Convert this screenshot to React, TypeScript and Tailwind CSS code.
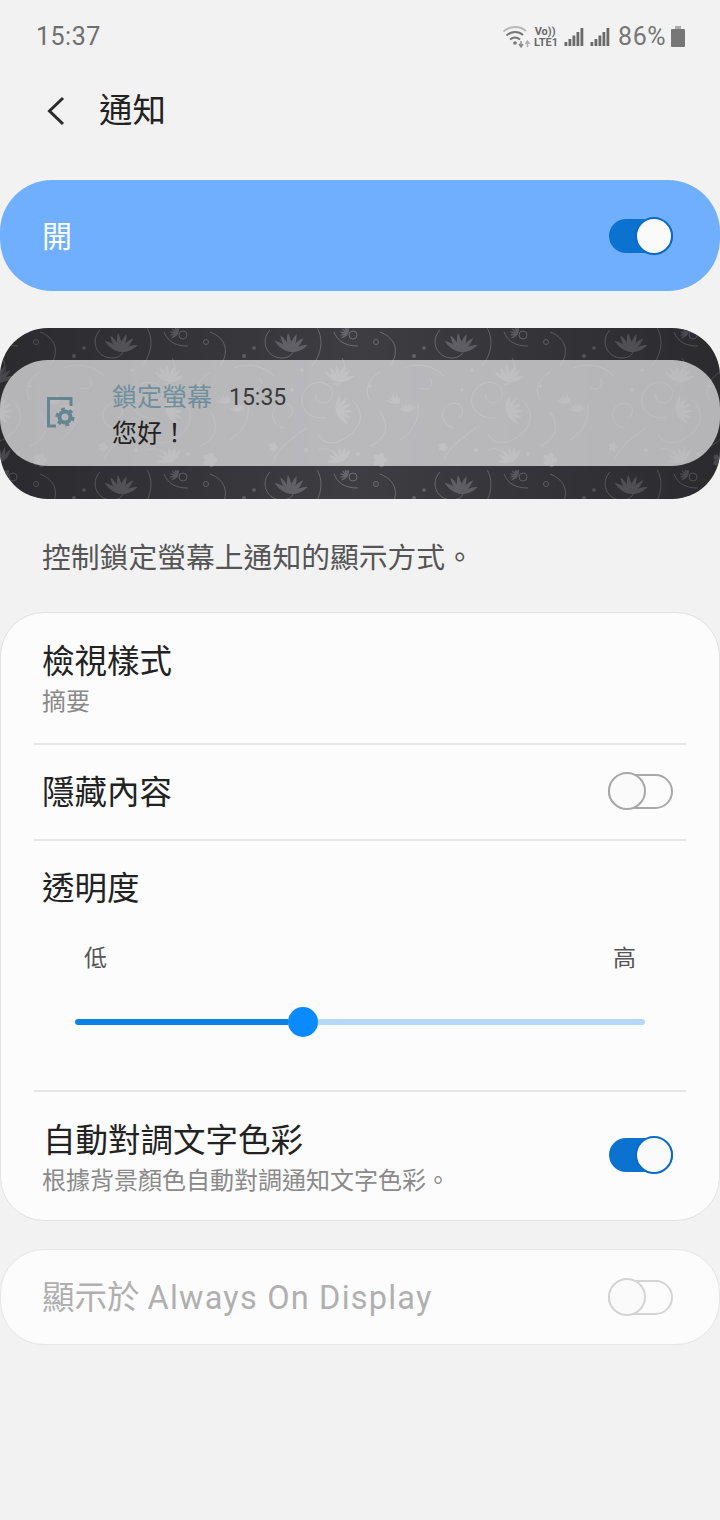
const cjk = "font-['Roboto','Noto_Sans_CJK_TC',sans-serif]";

function Toggle({ on, dim }: { on?: boolean; dim?: boolean }) {
  if (on) {
    return (
      <div className="flex h-[34px] w-[64px] shrink-0 items-center justify-end rounded-full bg-[#0b72d0]">
        <div className="h-[38px] w-[38px] shrink-0 rounded-full border-2 border-[#0b6bc4] bg-[#fafafa]" />
      </div>
    );
  }
  return (
    <div
      className={`flex h-[35px] w-[65px] shrink-0 items-center rounded-full border-2 ${
        dim ? "border-[#d4d4d4]" : "border-[#a8a8a8]"
      }`}
    >
      <div
        className={`-ml-[2px] h-[38px] w-[38px] shrink-0 rounded-full border-2 bg-[#fafafa] ${
          dim ? "border-[#d4d4d4]" : "border-[#a8a8a8]"
        }`}
      />
    </div>
  );
}

function Signal() {
  return (
    <svg width="20" height="20" viewBox="0 0 20 20" fill="#696969">
      <rect x="0.500" y="15" width="2.800" height="4" />
      <rect x="4.500" y="12" width="2.800" height="7" />
      <rect x="8.500" y="8.500" width="2.800" height="10.500" />
      <rect x="12.500" y="5" width="2.800" height="14" />
      <rect x="16.500" y="1" width="2.800" height="18" />
    </svg>
  );
}

function StatusIcons() {
  return (
    <div className="flex items-center text-[#767676]">
      <svg width="30" height="26" viewBox="0 0 30 26" fill="none">
        <path d="M1.500 7.500C8 1.500 18 1.500 24 7" stroke="#b9b9b9" strokeWidth="2" />
        <path d="M4.500 11.500C9.500 7 16.500 7 21 11" stroke="#777" strokeWidth="2" />
        <path d="M8 15.500C11 13 15 13 18 15.500" stroke="#777" strokeWidth="2" />
        <circle cx="13" cy="19" r="1.800" fill="#777" />
        <path d="M19 17v5M17 20l2 3 2-3" stroke="#8a8a8a" strokeWidth="1.400" />
        <path d="M25.500 23v-5M23.500 20l2-3 2 3" stroke="#b0b0b0" strokeWidth="1.400" />
      </svg>
      <div className="mr-[4px] flex w-[28px] flex-col items-center font-['Roboto',sans-serif] text-[11px] font-bold leading-[11px] text-[#6a6a6a]">
        <span className="-ml-[2px]">Vo))</span>
        <span>LTE1</span>
      </div>
      <Signal />
      <div className="ml-[6px]">
        <Signal />
      </div>
      <span className="ml-[8px] font-['Roboto',sans-serif] text-[25px] leading-none tracking-[0.5px] text-[#767676]">86%</span>
      <svg width="14" height="21" viewBox="0 0 14 21" className="ml-[5px]" fill="#777">
        <rect x="4" y="0" width="6" height="3" fill="#aaa" />
        <rect x="0" y="3" width="14" height="18" rx="1" />
      </svg>
    </div>
  );
}

// fan of narrow leaves, used for the thistles in the wallpaper
function Fan({ x, y, rot, size = 1 }: { x: number; y: number; rot: number; size?: number }) {
  return (
    <g transform={`translate(${x} ${y}) rotate(${rot}) scale(${size})`}>
      {[-62, -38, -14, 12, 36, 60].map((a) => (
        <path key={a} transform={`rotate(${a})`} d="M0 0C-3 -6 -2.500 -13 0 -19C2.500 -13 3 -6 0 0Z" />
      ))}
    </g>
  );
}

function Rosette({ x, y, r }: { x: number; y: number; r: number }) {
  return (
    <g>
      <circle cx={x} cy={y} r={r} />
      {[0, 72, 144, 216, 288].map((a) => (
        <circle
          key={a}
          cx={x + Math.cos((a * Math.PI) / 180) * r * 1.2}
          cy={y + Math.sin((a * Math.PI) / 180) * r * 1.2}
          r={r * 0.65}
        />
      ))}
    </g>
  );
}

// damask wallpaper tile, period taken from the reference (170 x 142)
function Wallpaper() {
  return (
    <svg className="absolute inset-0 h-full w-full" aria-hidden="true">
      <defs>
        <pattern id="damask" width="170" height="142" patternUnits="userSpaceOnUse" x="60" y="0">
          <g fill="none" stroke="#6c6c72" strokeWidth="1">
            <path d="M40 2C30 12 36 30 52 30C64 30 68 18 60 12" />
            <path d="M86 -2C94 10 92 26 82 38" />
            <circle cx="123" cy="7" r="4" />
            <circle cx="146" cy="14" r="2.500" />
            <path d="M104 4C108 14 116 18 128 18" />
            <path d="M150 4C166 10 170 24 160 38" />
            <path d="M4 40C18 34 34 38 44 48" />
            <path d="M96 90C70 92 64 66 82 56C96 50 108 62 100 72C94 78 84 74 86 66" />
            <path d="M104 56C116 58 118 40 112 30" />
            <path d="M54 100C42 98 38 82 50 76C60 72 68 84 58 90" />
            <path d="M76 100C60 112 50 118 44 132" />
            <path d="M122 72C136 84 132 102 112 112C100 118 92 114 88 106" />
            <path d="M150 84C160 96 156 112 140 118" />
            <path d="M0 112C12 104 20 92 18 76" />
            <path d="M20 60C30 64 34 56 30 50" />
            <path d="M88 122C98 118 106 124 108 134" />
            <path d="M150 44C138 52 134 62 140 72" />
          </g>
          <g fill="#66666c">
            <Fan x={60} y={24} rot={8} />
            <Fan x={108} y={54} rot={10} size={0.9} />
            <Fan x={106} y={84} rot={75} size={0.9} />
            <Fan x={118} y={6} rot={-60} size={0.45} />
            <Fan x={8} y={84} rot={-5} size={0.5} />
            <Fan x={166} y={76} rot={-5} size={0.55} />
            <Fan x={112} y={134} rot={-25} size={0.8} />
            <Rosette x={43} y={119} r={2.500} />
            <Rosette x={150} y={132} r={4} />
            <circle cx="72" cy="42" r="1.800" />
            <circle cx="62" cy="62" r="1.800" />
            <circle cx="14" cy="28" r="2" />
            <circle cx="24" cy="20" r="1.800" />
            <circle cx="140" cy="58" r="1.800" />
            <circle cx="76" cy="122" r="2" />
            <circle cx="128" cy="126" r="2" />
          </g>
        </pattern>
      </defs>
      <rect width="100%" height="100%" fill="url(#damask)" />
    </svg>
  );
}

export default function App() {
  return (
    <div className={`h-[1520px] w-[720px] overflow-hidden bg-[#f2f2f2] ${cjk}`}>
      <div className="flex h-[73px] items-center justify-between pl-[36px] pr-[35px]">
        <span className="mt-[1px] font-['Roboto',sans-serif] text-[25px] tracking-[0.5px] text-[#6e6e6e]">15:37</span>
        <StatusIcons />
      </div>

      <div className="flex h-[76px] items-center pl-[46px]">
        <svg width="20" height="30" viewBox="0 0 20 30" fill="none" stroke="#2b2b2b" strokeWidth="3">
          <path d="M17 2L3.500 15L17 28" />
        </svg>
        <span className="ml-[33px] text-[33.500px] text-[#222]">通知</span>
      </div>

      <div className="mt-[31px] flex h-[111px] items-center justify-between rounded-[52px] bg-[#70aefe] pl-[42px] pr-[47px]">
        <span className="mt-[1px] text-[30px] text-white">開</span>
        <Toggle on />
      </div>

      <div className="relative mt-[37px] h-[171px] overflow-hidden rounded-[48px] bg-[#3d3d42]">
        <Wallpaper />
        <div className="absolute inset-0 bg-linear-to-r from-black/30 via-transparent to-black/30" />
        <div className="absolute inset-x-0 top-[32px] flex h-[106px] items-center rounded-[48px] bg-[#dcdcdf]/78 pl-[47px]">
          <svg width="30" height="31" viewBox="0 0 30 31" fill="none" className="-mt-[2px]">
            <path d="M9 29H1.500V1.500H24V9" stroke="#648592" strokeWidth="3" />
            <circle cx="18" cy="20" r="5.500" stroke="#648592" strokeWidth="4" />
            <circle cx="18" cy="20" r="8" stroke="#648592" strokeWidth="3" strokeDasharray="3.800 4.580" />
          </svg>
          <div className="ml-[35px] mt-[6px] flex flex-col">
            <div className="flex items-center">
              <span className="text-[25px] leading-[34px] text-[#6f8f9c]">鎖定螢幕</span>
              <span className="ml-[17px] text-[23px] leading-[34px] text-[#3a3a3a]">15:35</span>
            </div>
            <span className="mt-[2px] text-[25px] leading-[34px] text-[#222]">您好！</span>
          </div>
        </div>
      </div>

      <p className="mt-[39px] pl-[42px] text-[28.800px] leading-[40px] text-[#555]">控制鎖定螢幕上通知的顯示方式。</p>

      <div className="mt-[34px] rounded-[44px] border border-[#e2e2e2] bg-[#fcfcfc]">
        <div className="flex h-[130px] flex-col justify-center pl-[41px] pt-[2px]">
          <span className="text-[32.500px] leading-[44px] text-[#222]">檢視樣式</span>
          <span className="mt-[2px] text-[24px] leading-[32px] text-[#8a8a8a]">摘要</span>
        </div>
        <div className="mx-[33px] h-[2px] bg-[#e6e6e6]" />
        <div className="flex h-[94px] items-center justify-between pl-[41px] pr-[46px]">
          <span className="mt-[2px] text-[32.500px] text-[#222]">隱藏內容</span>
          <div className="-mt-[2px]">
            <Toggle />
          </div>
        </div>
        <div className="mx-[33px] h-[2px] bg-[#e6e6e6]" />
        <div className="h-[249px] pt-[26px]">
          <div className="pl-[41px] text-[32.500px] leading-[44px] text-[#222]">透明度</div>
          <div className="mt-[32px] flex justify-between px-[83px] text-[23px] leading-[32px] text-[#555]">
            <span>低</span>
            <span>高</span>
          </div>
          <div className="mx-[74px] mt-[31px] flex h-[32px] items-center">
            <div className="h-[6px] w-[213px] rounded-l-full bg-[#0b82e8]" />
            <div className="h-[30px] w-[30px] shrink-0 rounded-full bg-[#0a8aff]" />
            <div className="h-[6px] flex-1 rounded-r-full bg-[#b5d8f6]" />
          </div>
        </div>
        <div className="mx-[33px] h-[2px] bg-[#e6e6e6]" />
        <div className="flex h-[128px] items-center justify-between pl-[41px] pr-[46px]">
          <div className="flex flex-col pt-[3px]">
            <span className="pl-[1px] text-[32.500px] leading-[44px] text-[#222]">自動對調文字色彩</span>
            <span className="mt-[2px] text-[24px] leading-[32px] text-[#8a8a8a]">根據背景顏色自動對調通知文字色彩。</span>
          </div>
          <div className="-mt-[2px]">
            <Toggle on />
          </div>
        </div>
      </div>

      <div className="mt-[28px] flex h-[96px] items-center justify-between rounded-[44px] border border-[#e6e6e6] bg-[#fcfcfc] pl-[41px] pr-[46px]">
        <span className="mt-[3px] text-[32.500px] text-[#b0b0b0]">
          顯示於 <span className="tracking-[1.200px]">Always On Display</span>
        </span>
        <Toggle dim />
      </div>
    </div>
  );
}
